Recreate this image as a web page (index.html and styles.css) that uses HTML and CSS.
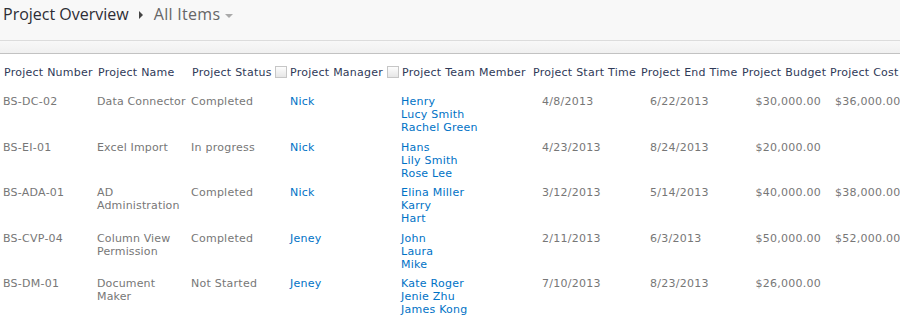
FILE: index.html
```html
<!DOCTYPE html>
<html>
<head>
<meta charset="utf-8">
<link rel="stylesheet" href="styles.css">
</head>
<body>
<div class="top">
  <div class="crumbs">
    <span class="site">Project Overview</span>
    <span class="sep"></span>
    <span class="view">All Items</span>
    <span class="caret"></span>
  </div>
</div>
<div class="band"></div>
<table class="list">
  <colgroup>
    <col class="c1"><col class="c2"><col class="c3"><col class="c4"><col class="c5"><col class="c6"><col class="c7"><col class="c8"><col class="c9">
  </colgroup>
  <thead>
    <tr>
      <th>Project Number</th>
      <th>Project Name</th>
      <th>Project Status</th>
      <th class="chk"><span class="box"></span>Project Manager</th>
      <th class="chk"><span class="box"></span>Project Team Member</th>
      <th>Project Start Time</th>
      <th>Project End Time</th>
      <th>Project Budget</th>
      <th>Project Cost</th>
    </tr>
  </thead>
  <tbody>
    <tr>
      <td>BS-DC-02</td>
      <td class="name">Data Connector</td>
      <td>Completed</td>
      <td class="pm">Nick</td>
      <td class="team">Henry<br>Lucy Smith<br>Rachel Green</td>
      <td class="date">4/8/2013</td>
      <td class="date">6/22/2013</td>
      <td class="money">$30,000.00</td>
      <td class="cost">$36,000.00</td>
    </tr>
    <tr>
      <td>BS-EI-01</td>
      <td class="name">Excel Import</td>
      <td>In progress</td>
      <td class="pm">Nick</td>
      <td class="team">Hans<br>Lily Smith<br>Rose Lee</td>
      <td class="date">4/23/2013</td>
      <td class="date">8/24/2013</td>
      <td class="money">$20,000.00</td>
      <td class="cost"></td>
    </tr>
    <tr>
      <td>BS-ADA-01</td>
      <td class="name">AD Administration</td>
      <td>Completed</td>
      <td class="pm">Nick</td>
      <td class="team">Elina Miller<br>Karry<br>Hart</td>
      <td class="date">3/12/2013</td>
      <td class="date">5/14/2013</td>
      <td class="money">$40,000.00</td>
      <td class="cost">$38,000.00</td>
    </tr>
    <tr>
      <td>BS-CVP-04</td>
      <td class="name">Column View Permission</td>
      <td>Completed</td>
      <td class="pm">Jeney</td>
      <td class="team">John<br>Laura<br>Mike</td>
      <td class="date">2/11/2013</td>
      <td class="date">6/3/2013</td>
      <td class="money">$50,000.00</td>
      <td class="cost">$52,000.00</td>
    </tr>
    <tr>
      <td>BS-DM-01</td>
      <td class="name">Document Maker</td>
      <td>Not Started</td>
      <td class="pm">Jeney</td>
      <td class="team">Kate Roger<br>Jenie Zhu<br>James Kong</td>
      <td class="date">7/10/2013</td>
      <td class="date">8/23/2013</td>
      <td class="money">$26,000.00</td>
      <td class="cost"></td>
    </tr>
  </tbody>
</table>
</body>
</html>
```
FILE: styles.css
```css
html, body {
  margin: 0;
  padding: 0;
  background: #ffffff;
  overflow: hidden;
}
body {
  font-family: "DejaVu Sans", Verdana, sans-serif;
  font-size: 11px;
  letter-spacing: 0.25px;
  color: #777777;
}
.top {
  height: 40px;
  background: #f8f8f8;
  border-bottom: 1px solid #dcdcdc;
  box-sizing: content-box;
}
.crumbs {
  display: flex;
  align-items: center;
  padding: 4px 0 0 3px;
  height: 20px;
}
.site {
  font-family: "Open Sans", sans-serif;
  font-size: 16px;
  color: #2d2d35;
  letter-spacing: 0;
}
.sep {
  width: 0;
  height: 0;
  border-top: 4px solid transparent;
  border-bottom: 4px solid transparent;
  border-left: 4px solid #444;
  margin: 1px 11px 0 10px;
}
.view {
  font-family: "Open Sans", sans-serif;
  font-size: 16px;
  color: #666666;
  letter-spacing: 0.3px;
}
.caret {
  width: 0;
  height: 0;
  border-left: 4px solid transparent;
  border-right: 4px solid transparent;
  border-top: 4px solid #aaaaaa;
  margin: 3px 0 0 5px;
}
.band {
  height: 12px;
  background: linear-gradient(#f8f8f8, #f0f0f0);
  border-bottom: 1px solid #c2c2c2;
}
.list {
  border-collapse: collapse;
  table-layout: fixed;
  width: 900px;
}
.c1 { width: 94px; }
.c2 { width: 94px; }
.c3 { width: 84px; }
.c4 { width: 112px; }
.c5 { width: 146px; }
.c6 { width: 108px; }
.c7 { width: 101px; }
.c8 { width: 88px; }
.c9 { width: 73px; }
th {
  font-weight: normal;
  text-align: left;
  color: #2f3a58;
  white-space: nowrap;
  padding: 12px 0 13px 3px;
  line-height: 13px;
  overflow: visible;
}
th:nth-child(-n+3) { padding-left: 4px; }
th.chk { padding-left: 3px; }
.box {
  display: inline-block;
  width: 12px;
  height: 12px;
  border: 1px solid #c6c6c6;
  background: linear-gradient(#fdfdfd, #e6e6e6);
  vertical-align: -2px;
  margin-right: 3px;
  box-sizing: border-box;
}
td {
  vertical-align: top;
  line-height: 13px;
  padding: 3px 4px 3.5px 3px;
  color: #777777;
}
td.name { padding-right: 0; letter-spacing: 0.15px; }
td.pm { padding-left: 18px; color: #0072c6; }
td.team { padding-left: 17px; color: #0072c6; }
td.date { padding-left: 12px; white-space: nowrap; }
td.money { text-align: right; padding-right: 6px; white-space: nowrap; }
td.cost { padding-left: 8px; padding-right: 0; white-space: nowrap; }
```
